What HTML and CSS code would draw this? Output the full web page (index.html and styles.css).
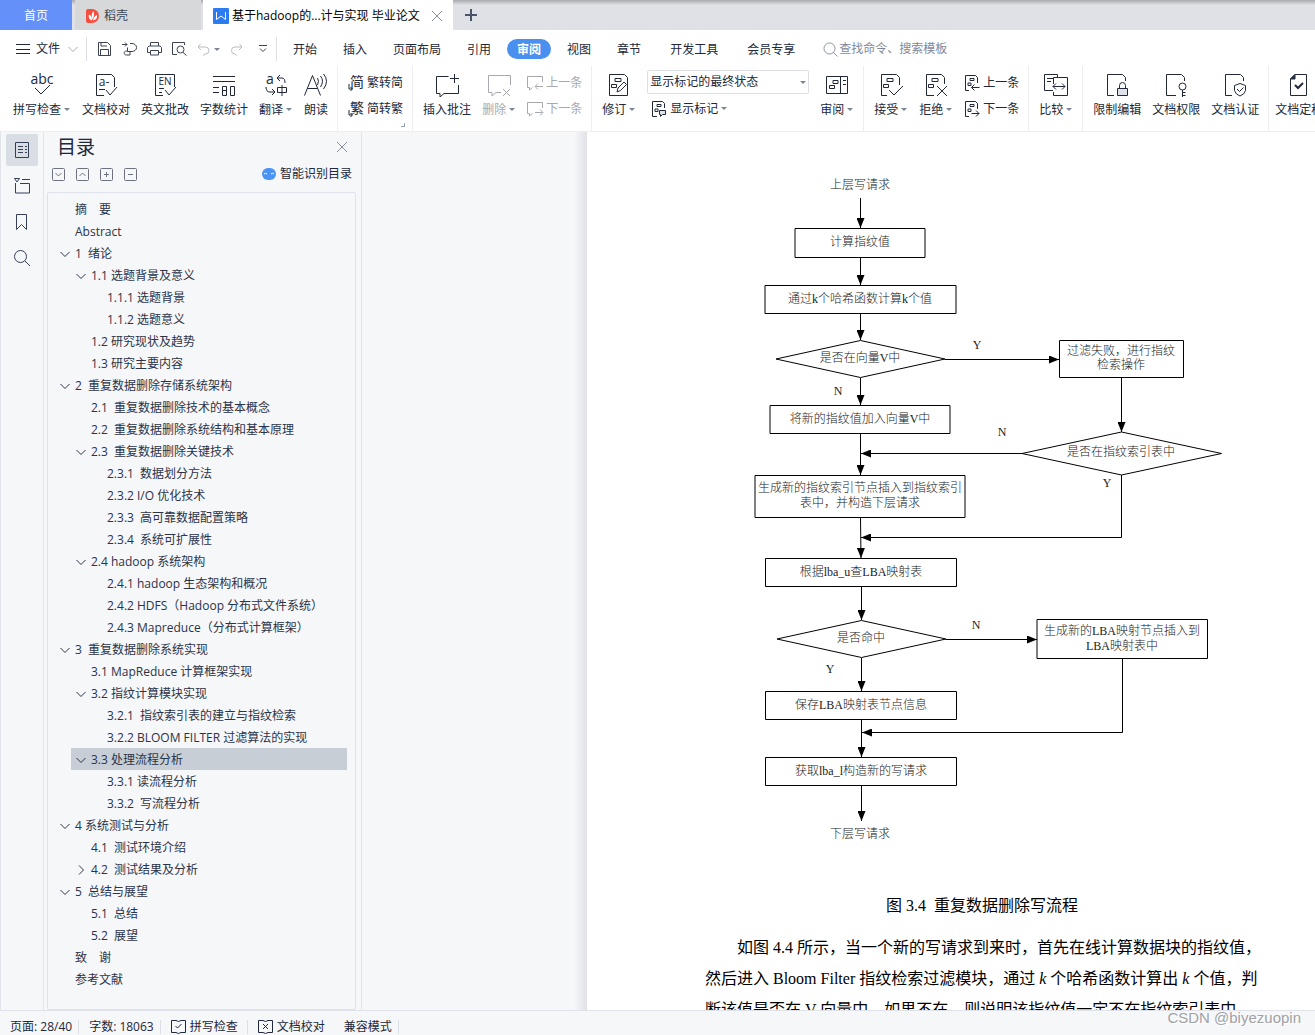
FILE: index.html
```html
<!DOCTYPE html>
<html lang="zh-CN">
<head>
<meta charset="utf-8">
<title>基于hadoop的...计与实现 毕业论文</title>
<link rel="stylesheet" href="styles.css">
</head>
<body>
<svg class="defs" aria-hidden="true">
  <symbol id="chev" viewBox="0 0 10 10"><path d="M.5 3 5 7.500 9.500 3"/></symbol>
  <symbol id="bubble" viewBox="0 0 24 24"><path d="M13.500 3.500H1.500v17h3.500v3.500l4-3.500h14.500V12"/></symbol>
  <symbol id="marks" viewBox="0 0 24 24"><path d="M8 5.500h6v3H8zM4.500 11.500h5v3h-5z"/></symbol>
  <symbol id="pageprev" viewBox="0 0 16 16"><path d="M5 15.500H1.500V.5h10l2 2V8M6 3.500h4v2H6zM4 8h3v2.500H4zM15.500 12.500H8M10.500 9.500l-3 3 3 3"/></symbol>
  <symbol id="pagenext" viewBox="0 0 16 16"><path d="M5 15.500H1.500V.5h10l2 2V8M6 3.500h4v2H6zM4 8h3v2.500H4zM7.500 12.500H15M12 9.500l3 3-3 3"/></symbol>
</svg>

<header>
  <div class="tabs">
    <button class="tab tab-home">首页</button>
    <button class="tab tab-docer">
      <svg width="14" height="14" viewBox="0 0 14 14"><path d="M0 2a2 2 0 0 1 2-2h4a7 7 0 0 1 0 14H2a2 2 0 0 1-2-2z" fill="#f5503f"/><path d="M6 11.500C2.500 10.500 2.500 7 3 5.500 5 6.500 6 8 6 11.500zM6.500 10.500C5 6.500 6 4 7.500 2 8.500 5 8 8 6.500 10.500zM7 11.500C7.500 8.500 9 6.500 11 6c.5 3-1 5-4 5.500z" fill="#fff"/></svg>
      稻壳</button>
    <div class="tab tab-doc">
      <svg width="16" height="16" viewBox="0 0 16 16"><rect width="16" height="16" rx="1" fill="#2b7cf0"/><path class="mark" d="M3.500 4v7.500L8 8l4.500 3.500V4"/></svg>
      <span>基于hadoop的...计与实现 毕业论文</span>
      <button class="close" aria-label="关闭标签"><svg width="10" height="10" viewBox="0 0 10 10"><path d="M0 0l10 10M10 0 0 10"/></svg></button>
    </div>
    <button class="newtab" aria-label="新建"><svg width="12" height="12" viewBox="0 0 12 12"><path d="M6 0v12M0 6h12"/></svg></button>
  </div>

  <div class="menubar">
    <button class="file"><svg width="14" height="10" viewBox="0 0 14 10"><path d="M0 .5h14M0 5.500h14M0 9.500h14"/></svg>文件<svg class="dim" width="10" height="10"><use href="#chev"/></svg></button>
    <div class="quick">
      <button aria-label="保存"><svg width="15" height="14" viewBox="0 0 15 14"><path d="M1.500.5h9l3 3v10h-12zM3.500 13V7.500h8V13M4 .5v3.500h6"/></svg></button>
      <button aria-label="输出"><svg width="15" height="14" viewBox="0 0 15 14"><path d="M0 2.500h5M3 .5l2 2-2 2M8 1.500h2a4 3.500 0 0 1 0 8H5.500V5.500M5.500 9.500a2 2 0 1 0-1 3.500h3.500v-3.500"/></svg></button>
      <button aria-label="打印"><svg width="15" height="14" viewBox="0 0 15 14"><path d="M3.500 4V.5h8V4M3.500 10.500H.5v-5L2 4h11l1.500 1.500v5h-3M3.500 8.500h8v4.500h-8z"/></svg></button>
      <button aria-label="打印预览"><svg width="15" height="14" viewBox="0 0 15 14"><path d="M5 12.500H.5V.5h12V3M11 10.500l3.500 3"/><circle cx="8.500" cy="7.500" r="3.500"/></svg></button>
      <button class="dim" aria-label="撤销"><svg width="13" height="13" viewBox="0 0 13 13"><path d="M3.500 1 1 4l3 3M1 4h7.500a3.500 3.500 0 0 1 0 7L6 12.500"/></svg></button>
      <i class="arrow"></i>
      <button class="dim" aria-label="恢复"><svg width="13" height="13" viewBox="0 0 13 13"><path d="M9.500 1 12 4 9 7M12 4H5a3.500 3.500 0 0 0 0 7l1.500 1.500"/></svg></button>
      <button class="custom" aria-label="自定义"><svg width="8" height="8" viewBox="0 0 8 8"><path d="M0 .5h8M1 3.500l3 3 3-3"/></svg></button>
    </div>
    <nav class="menus">
      <a href="#">开始</a><a href="#">插入</a><a href="#">页面布局</a><a href="#">引用</a><a href="#" class="on">审阅</a><a href="#">视图</a><a href="#">章节</a><a href="#" class="wide">开发工具</a><a href="#" class="wide">会员专享</a>
    </nav>
    <label class="search"><svg width="15" height="15" viewBox="0 0 15 15"><circle cx="6.500" cy="6.500" r="5.500"/><path d="m10.500 10.500 4 4"/></svg><input type="text" placeholder="查找命令、搜索模板" aria-label="查找命令"></label>
  </div>

  <div class="ribbon">
    <div class="group">
      <button class="big"><svg width="24" height="24" viewBox="0 0 24 24"><text x="12" y="11" class="glyph g14">abc</text><path d="m5 15 6 6 9-9"/></svg><span>拼写检查<i class="arrow"></i></span></button>
      <button class="big"><svg width="24" height="24" viewBox="0 0 24 24"><path d="M10 22.500H2.500v-21h15l3 3V14M5 16.500h6M12 17l4 5 7-8"/><text x="10" y="13" class="glyph g12">a-</text></svg><span>文档校对</span></button>
      <button class="big"><svg width="24" height="24" viewBox="0 0 24 24"><path d="M10 22.500H2.500v-21h19V14M6 15.500h5M6 19.500h3M12 17l4 5 7-8"/><text x="12" y="12" class="glyph g10">EN</text></svg><span>英文批改</span></button>
      <button class="big"><svg width="24" height="24" viewBox="0 0 24 24"><path d="M1 3.500h22M1 8.500h22M1 14.500h6M1 19.500h6M10.500 13.500h4v9h-4zM18.500 13.500h4v9h-4zM10 17.500h5"/></svg><span>字数统计</span></button>
      <button class="big"><svg width="24" height="24" viewBox="0 0 24 24"><text x="6" y="11" class="glyph g14">a</text><path d="M16 2l-3 3 3 3M13 5h5q3 0 3 5M2 14q0 5 4 5h5M8 16l3 3-3 3M13.500 14.500h9v5h-9zM18 12v11"/></svg><span>翻译<i class="arrow"></i></span></button>
      <button class="big"><svg width="24" height="24" viewBox="0 0 24 24"><path d="m.5 22.500 8-20 8 20M3.500 15.500h10M13.500 5q2 3 0 7M16.500 3q4 5 0 11M19.500 1q6 7 0 15"/></svg><span>朗读</span></button>
    </div>
    <div class="group corner">
      <div class="stack">
        <button class="small"><svg width="16" height="16" viewBox="0 0 16 16"><text x="9" y="12" class="glyph g14">简</text><path d="M1 9v5h3M2.500 12l2 2-2 2"/></svg>繁转简</button>
        <button class="small"><svg width="16" height="16" viewBox="0 0 16 16"><text x="9" y="12" class="glyph g14">繁</text><path d="M1 9v5h3M2.500 12l2 2-2 2"/></svg>简转繁</button>
      </div>
    </div>
    <div class="group">
      <button class="big"><svg width="24" height="24" viewBox="0 0 24 24"><use href="#bubble"/><path d="M19.500 1v9M15 5.500h9"/></svg><span>插入批注</span></button>
      <button class="big dim"><svg width="24" height="24" viewBox="0 0 24 24"><path d="M23.500 12V2.500h-22v17H5V23l4-3.500h5M16 16l7 7M23 16l-7 7"/></svg><span>删除<i class="arrow"></i></span></button>
      <div class="stack">
        <button class="small dim"><svg width="16" height="16" viewBox="0 0 16 16"><path d="M15.500 7V1.500H.5v11h2V15l3-2.500M16 11.500H8.500M11 8.500l-3 3 3 3"/></svg>上一条</button>
        <button class="small dim"><svg width="16" height="16" viewBox="0 0 16 16"><path d="M15.500 7V1.500H.5v11h2V15l3-2.500M8 11.500h7.500M13 8.500l3 3-3 3"/></svg>下一条</button>
      </div>
    </div>
    <div class="group">
      <button class="big"><svg width="24" height="24" viewBox="0 0 24 24"><path d="M2.500 1.500h15l3 3v18h-18zM10 19l1-4 6-6 2.500 2.500-6 6z"/><use href="#marks"/></svg><span>修订<i class="arrow"></i></span></button>
      <div class="stack">
        <label class="combo"><select aria-label="显示状态"><option>显示标记的最终状态</option></select><i class="arrow"></i></label>
        <button class="small inset"><svg width="16" height="16" viewBox="0 0 16 16"><path d="M6 15.500H1.500V.5h10l2 2V7M6 3.500h4v2H6zM4 8h3v2.500H4z"/><path d="M8.500 9.500h6v4h-3l-2 2v-2h-1z" fill="#dfe2e8"/></svg><span>显示标记<i class="arrow"></i></span></button>
      </div>
      <button class="big"><svg width="24" height="24" viewBox="0 0 24 24"><path d="M1.500 3.500h21v17h-21zM15.500 3.500v17M18 7.500h3M18 11.500h3M8 7.500h5v3H8zM4.500 12.500h5v3h-5z"/></svg><span>审阅<i class="arrow"></i></span></button>
    </div>
    <div class="group">
      <button class="big"><svg width="24" height="24" viewBox="0 0 24 24"><path d="M8 22.500H2.500v-21h15l3 3V12M10 17l5 5 9-9"/><use href="#marks"/></svg><span>接受<i class="arrow"></i></span></button>
      <button class="big"><svg width="24" height="24" viewBox="0 0 24 24"><path d="M10 22.500H2.500v-21h15l3 3V11M13 13l10 10M23 13 13 23"/><use href="#marks"/></svg><span>拒绝<i class="arrow"></i></span></button>
      <div class="stack">
        <button class="small"><svg width="16" height="16"><use href="#pageprev"/></svg>上一条</button>
        <button class="small"><svg width="16" height="16"><use href="#pagenext"/></svg>下一条</button>
      </div>
    </div>
    <div class="group">
      <button class="big"><svg width="24" height="24" viewBox="0 0 24 24"><path d="M9 17.500H.5v-16h13V4.500M3 5.500h7M3 8.500h4M9.500 11V4.500h14v18h-14V19M9 13.500h12M12 10.500l-3 3 3 3M18 10.500l3 3-3 3"/></svg><span>比较<i class="arrow"></i></span></button>
    </div>
    <div class="group">
      <button class="big"><svg width="24" height="24" viewBox="0 0 24 24"><path d="M9 22.500H2.500v-21h15l3 3V8M14.500 15v-2.500a3 3 0 0 1 6 0V15"/><path d="M12.500 15.500h10v7h-10z" fill="#dfe2e8"/></svg><span>限制编辑</span></button>
      <button class="big"><svg width="24" height="24" viewBox="0 0 24 24"><path d="M12 22.500H2.500v-21h15l3 3V8M18.500 17v7M18.500 19.500h3M18.500 22.500h3"/><circle cx="18.500" cy="13.500" r="3.500"/></svg><span>文档权限</span></button>
      <button class="big"><svg width="24" height="24" viewBox="0 0 24 24"><path d="M9 22.500H2.500v-21h15l3 3V8M17 10.500l5.500 2v5q-1 4-5.500 5.500-4.500-1.500-5.500-5.500v-5zM14 16l2.500 2.500 4-4"/></svg><span>文档认证</span></button>
    </div>
    <div class="group">
      <button class="big"><svg width="24" height="24" viewBox="0 0 24 24"><path d="M8 1.500h11.500v21h-16V6z"/><path d="M8 1.500V6H3.500z" fill="#2c3346"/><path d="m8 12 3 3 5-5" stroke-width="2"/></svg><span>文档定稿</span></button>
    </div>
  </div>
</header>

<main>
  <nav class="rail">
    <button class="on" aria-label="目录"><svg width="16" height="16" viewBox="0 0 16 16"><path d="M1.500.5h13v15h-13zM4 4.500h5M11 4.500h2M4 7.500h5M11 7.500h2M4 10.500h5M11 10.500h2"/></svg></button>
    <button aria-label="章节"><svg width="16" height="16" viewBox="0 0 16 16"><path d="M.5.5h5L3 4zM8 1.500h8M1.500 5v10h14V5.500H6"/></svg></button>
    <button aria-label="书签"><svg width="16" height="16" viewBox="0 0 16 16"><path d="M2.500.5h10v15l-5-5-5 5z"/></svg></button>
    <button aria-label="查找"><svg width="16" height="16" viewBox="0 0 16 16"><circle cx="6.500" cy="6.500" r="6"/><path d="m11 11 5 5"/></svg></button>
  </nav>

  <aside class="outline">
    <div class="outline-head"><h2>目录</h2><button class="close" aria-label="关闭"><svg width="10" height="10" viewBox="0 0 10 10"><path d="M0 0l10 10M10 0 0 10"/></svg></button></div>
    <div class="outline-tools">
      <button aria-label="展开"><svg width="13" height="13" viewBox="0 0 13 13"><rect x=".5" y=".5" width="12" height="12" rx="1"/><path d="m3.500 5 3 3 3-3"/></svg></button>
      <button aria-label="收起"><svg width="13" height="13" viewBox="0 0 13 13"><rect x=".5" y=".5" width="12" height="12" rx="1"/><path d="m3.500 8 3-3 3 3"/></svg></button>
      <button aria-label="升级"><svg width="13" height="13" viewBox="0 0 13 13"><rect x=".5" y=".5" width="12" height="12" rx="1"/><path d="M4 6.500h5M6.500 4v5"/></svg></button>
      <button aria-label="降级"><svg width="13" height="13" viewBox="0 0 13 13"><rect x=".5" y=".5" width="12" height="12" rx="1"/><path d="M4 6.500h5"/></svg></button>
      <button class="smart"><svg width="14" height="12" viewBox="0 0 14 12"><rect width="14" height="12" rx="6" fill="#4a94f5" stroke="none"/><path d="M2 6q1.500-1.500 3 0M9 6q1.500-1.500 3 0" stroke="#fff"/></svg>智能识别目录</button>
    </div>
    <ul class="tree">
      <li class="l1"><a href="#">摘　要</a></li>
      <li class="l1"><a href="#">Abstract</a></li>
      <li class="l1"><button aria-label="折叠"><svg width="10" height="10"><use href="#chev"/></svg></button><a href="#">1&nbsp; 绪论</a></li>
      <li class="l2"><button aria-label="折叠"><svg width="10" height="10"><use href="#chev"/></svg></button><a href="#">1.1 选题背景及意义</a></li>
      <li class="l3"><a href="#">1.1.1 选题背景</a></li>
      <li class="l3"><a href="#">1.1.2 选题意义</a></li>
      <li class="l2"><a href="#">1.2 研究现状及趋势</a></li>
      <li class="l2"><a href="#">1.3 研究主要内容</a></li>
      <li class="l1"><button aria-label="折叠"><svg width="10" height="10"><use href="#chev"/></svg></button><a href="#">2&nbsp; 重复数据删除存储系统架构</a></li>
      <li class="l2"><a href="#">2.1&nbsp; 重复数据删除技术的基本概念</a></li>
      <li class="l2"><a href="#">2.2&nbsp; 重复数据删除系统结构和基本原理</a></li>
      <li class="l2"><button aria-label="折叠"><svg width="10" height="10"><use href="#chev"/></svg></button><a href="#">2.3&nbsp; 重复数据删除关键技术</a></li>
      <li class="l3"><a href="#">2.3.1&nbsp; 数据划分方法</a></li>
      <li class="l3"><a href="#">2.3.2 I/O 优化技术</a></li>
      <li class="l3"><a href="#">2.3.3&nbsp; 高可靠数据配置策略</a></li>
      <li class="l3"><a href="#">2.3.4&nbsp; 系统可扩展性</a></li>
      <li class="l2"><button aria-label="折叠"><svg width="10" height="10"><use href="#chev"/></svg></button><a href="#">2.4 hadoop 系统架构</a></li>
      <li class="l3"><a href="#">2.4.1 hadoop 生态架构和概况</a></li>
      <li class="l3"><a href="#">2.4.2 HDFS（Hadoop 分布式文件系统）</a></li>
      <li class="l3"><a href="#">2.4.3 Mapreduce（分布式计算框架）</a></li>
      <li class="l1"><button aria-label="折叠"><svg width="10" height="10"><use href="#chev"/></svg></button><a href="#">3&nbsp; 重复数据删除系统实现</a></li>
      <li class="l2"><a href="#">3.1 MapReduce 计算框架实现</a></li>
      <li class="l2"><button aria-label="折叠"><svg width="10" height="10"><use href="#chev"/></svg></button><a href="#">3.2 指纹计算模块实现</a></li>
      <li class="l3"><a href="#">3.2.1&nbsp; 指纹索引表的建立与指纹检索</a></li>
      <li class="l3"><a href="#">3.2.2 BLOOM FILTER 过滤算法的实现</a></li>
      <li class="l2 current"><button aria-label="折叠"><svg width="10" height="10"><use href="#chev"/></svg></button><a href="#">3.3 处理流程分析</a></li>
      <li class="l3"><a href="#">3.3.1 读流程分析</a></li>
      <li class="l3"><a href="#">3.3.2&nbsp; 写流程分析</a></li>
      <li class="l1"><button aria-label="折叠"><svg width="10" height="10"><use href="#chev"/></svg></button><a href="#">4 系统测试与分析</a></li>
      <li class="l2"><a href="#">4.1&nbsp; 测试环境介绍</a></li>
      <li class="l2"><button aria-label="展开"><svg width="10" height="10" viewBox="0 0 10 10"><path d="M3 .5 7.500 5 3 9.500"/></svg></button><a href="#">4.2&nbsp; 测试结果及分析</a></li>
      <li class="l1"><button aria-label="折叠"><svg width="10" height="10"><use href="#chev"/></svg></button><a href="#">5&nbsp; 总结与展望</a></li>
      <li class="l2"><a href="#">5.1&nbsp; 总结</a></li>
      <li class="l2"><a href="#">5.2&nbsp; 展望</a></li>
      <li class="l1"><a href="#">致　谢</a></li>
      <li class="l1"><a href="#">参考文献</a></li>
    </ul>
  </aside>

  <section class="canvas">
    <article class="paper">
      <figure>
        <svg class="flow" width="500" height="680" viewBox="732 170 500 680">
          <defs><marker id="tip" viewBox="0 0 10 8" refX="10" refY="4" markerWidth="11" markerHeight="8" markerUnits="userSpaceOnUse" orient="auto"><path d="M0 0 10 4 0 8z" fill="#000" stroke="none"/></marker></defs>
          <path d="M795 228.500h130v29H795zM765 285.500h191v28H765zM770 405.500h180v28H770zM755 475.500h210v42H755zM765.500 558.500h191v28h-191zM765.500 691.500h191v28h-191zM765.500 757.500h191v28h-191zM1059.500 340.500h124v37h-124zM1037 619.500h170.500v39H1037z"/>
          <path d="m776 359 84.500-18.500L945 359l-84.500 18.500zM777 639l84.500-18.500L946 639l-84.500 18.500zM1022 453.500l99.500-21.500 100 21.500-100 21.500z"/>
          <g marker-end="url(#tip)">
            <path d="M860.500 198v30"/><path d="M860.500 258v27"/><path d="M860.500 314v26"/><path d="M860.500 378v27"/><path d="M860.500 434v41"/><path d="M860.500 518l.5 40"/><path d="M861.500 587v33"/><path d="M861.500 658v33"/><path d="M861.500 720v37"/><path d="M861.500 786v35"/>
            <path d="M945 359.500h114"/><path d="M1121.500 378v54"/><path d="M1022 453.500H861"/><path d="M1121.500 475v62.500H861"/><path d="M946 639.500h91"/><path d="M1122.500 659v73.500H862"/>
          </g>
          <g class="flow-text">
            <text x="860" y="189">上层写请求</text><text x="860" y="246">计算指纹值</text><text x="860" y="303">通过k个哈希函数计算k个值</text><text x="860" y="362">是否在向量V中</text><text x="860" y="423">将新的指纹值加入向量V中</text>
            <text x="860" y="492">生成新的指纹索引节点插入到指纹索引</text><text x="860" y="507">表中，并构造下层请求</text><text x="861" y="576">根据lba_u查LBA映射表</text><text x="861" y="642">是否命中</text><text x="861" y="709">保存LBA映射表节点信息</text><text x="861" y="775">获取lba_l构造新的写请求</text><text x="860" y="838">下层写请求</text>
            <text x="1121" y="355">过滤失败，进行指纹</text><text x="1121" y="369">检索操作</text><text x="1121" y="456">是否在指纹索引表中</text><text x="1122" y="635">生成新的LBA映射节点插入到</text><text x="1122" y="650">LBA映射表中</text>
            <text x="977" y="349">Y</text><text x="838" y="395">N</text><text x="1002" y="436">N</text><text x="1107" y="487">Y</text><text x="976" y="629">N</text><text x="830" y="673">Y</text>
          </g>
        </svg>
        <figcaption>图 3.4&nbsp; 重复数据删除写流程</figcaption>
      </figure>
      <p>如图 4.4 所示，当一个新的写请求到来时，首先在线计算数据块的指纹值，<br>然后进入 Bloom Filter 指纹检索过滤模块，通过 <em>k</em> 个哈希函数计算出 <em>k</em> 个值，判<br>断该值是否在 V 向量中，如果不在，则说明该指纹值一定不在指纹索引表中，</p>
    </article>
  </section>
</main>

<footer>
  <span class="cell">页面: 28/40</span>
  <span class="cell">字数: 18063</span>
  <button class="cell"><svg width="15" height="15" viewBox="0 0 15 15"><path d="M5 1.500H.5v12H5l2.500 1 2.500-1h4.500v-12H10M5 1.500l2.500 1 2.500-1M4.500 7l2 2 4-4"/></svg>拼写检查</button>
  <button class="cell plain"><svg width="15" height="15" viewBox="0 0 15 15"><path d="M5 1.500H.5v12H5l2.500 1 2.500-1h4.500v-12H10M5 1.500l2.500 1 2.500-1M5 5l5 5M10 5l-5 5"/></svg>文档校对</button>
  <span class="cell">兼容模式</span>
</footer>
<div class="watermark">CSDN @biyezuopin</div>
</body>
</html>
```
FILE: styles.css
```css
* { box-sizing: border-box; }
body {
  margin: 0;
  height: 100vh;
  display: flex;
  flex-direction: column;
  overflow: hidden;
  background: #f6f7f9;
  color: #20283a;
  font: 12px/18px "Open Sans", "Noto Sans CJK SC", sans-serif;
  white-space: nowrap;
}
button, input, select { margin: 0; padding: 0; border: 0; background: none; color: inherit; font: inherit; }
button { display: flex; align-items: center; }
a { color: inherit; text-decoration: none; }
svg { flex: none; fill: none; stroke: currentColor; overflow: visible; }
.defs { position: absolute; width: 0; height: 0; }
.dim { color: #a6a9b0; }
.arrow {
  flex: none;
  display: inline-block;
  margin: 0 1px 0 3px;
  border: 3px solid transparent;
  border-top-color: #7c8498;
  border-bottom: 0;
  vertical-align: 3px;
}

/* Window tabs */
.tabs { display: flex; height: 30px; background: linear-gradient(#a8aaae, #dfe1e6 5px); }
.tab { display: flex; align-items: center; padding-top: 2px; }
.tab-home { width: 72px; justify-content: center; background: #6390f9; color: #fff; }
.tab-docer { width: 126px; margin: 0 2px 0 3px; padding-left: 11px; gap: 4px; background: #d7d8da; color: #3f4654; }
.tab-docer svg, .tab-doc > svg { stroke: none; }
.tab-doc .mark { fill: none; stroke: #fff; }
.tab-doc { width: 250px; padding-right: 11px; padding-left: 10px; gap: 3px; background: #fff; color: #000; }
.tab-doc .close { margin-left: auto; }
.close { color: #8a92a5; }
.newtab { padding: 0 12px; color: #4a5468; }
.newtab svg { stroke-width: 2; }

/* Menu bar */
.menubar { display: flex; align-items: center; height: 36px; padding: 2px 0 0 16px; background: #fff; }
.file { gap: 6px; height: 24px; padding-right: 8px; border-right: 1px solid #dcdfe5; }
.file .dim { margin-left: 2px; }
.quick { display: flex; align-items: center; gap: 10px; height: 24px; padding: 0 9px 0 10px; border-right: 1px solid #dcdfe5; color: #3c4354; }
.quick .dim { color: #b9bcc3; }
.quick .arrow { margin: 0 0 0 -6px; }
.quick .custom { margin: 0 0 0 6px; }
.menus { display: flex; align-items: center; gap: 26px; margin-left: 16px; }
.menus a { padding-top: 2px; }
.menus .on { margin: 0 -10px; padding: 2px 10px 0; border-radius: 10px; background: #4a90f0; color: #fff; font-weight: bold; }
.menus .wide { margin-left: 3px; }
.search { display: flex; align-items: center; gap: 1px; margin-left: 28px; color: #8b93a6; }
.search input { width: 120px; }
.search input::placeholder { color: #7f879b; opacity: 1; }

/* Ribbon */
.ribbon { display: flex; flex: none; height: 66px; padding: 0 0 0 3px; overflow: hidden; background: #fff; border-bottom: 1px solid #eceef1; }
.group { display: flex; flex: none; align-items: flex-start; gap: 11px; padding: 7px 9px 0 10px; border-right: 1px solid #eceef1; }
.group:last-child { border: 0; padding-left: 6px; }
.big { flex-direction: column; gap: 4px; }
.stack { display: flex; flex-direction: column; gap: 6px; }
.small { gap: 3px; height: 20px; }
.corner { background: linear-gradient(#9aa1b1, #9aa1b1) right 7px bottom 4px / 4px 1px no-repeat, linear-gradient(#9aa1b1, #9aa1b1) right 7px bottom 4px / 1px 4px no-repeat; }
.glyph { fill: currentColor; stroke: none; text-anchor: middle; }
.g14 { font-size: 14px; }
.g12 { font-size: 12px; }
.g10 { font-size: 10px; }
.combo { display: flex; align-items: center; width: 162px; height: 24px; margin: -3px 0 -1px; padding: 0 1px 0 2px; border: 1px solid #dcdfe5; border-radius: 2px; }
.combo select { flex: 1; appearance: none; }
.inset { margin-left: 4px; }

/* Body */
main { display: flex; flex: 1; min-height: 0; border-bottom: 1px solid #dfe2e8; }
.rail { display: flex; flex-direction: column; gap: 4px; width: 44px; padding: 2px 5px; border: solid #e1e4ea; border-width: 0 1px; }
.rail button { justify-content: center; width: 32px; height: 32px; border-radius: 2px; color: #343e57; }
.rail .on { background: #d9dde4; }
.outline { display: flex; flex-direction: column; width: 318px; padding: 0 5px 0 3px; border-right: 1px solid #e1e4ea; }
.outline-head { display: flex; align-items: center; justify-content: space-between; height: 30px; padding: 0 9px 0 10px; }
.outline-head h2 { margin: 0; font-size: 19px; line-height: 28px; font-weight: normal; }
.outline-tools { display: flex; align-items: center; gap: 11px; height: 24px; padding: 0 4px 0 5px; color: #6c7280; }
.smart { gap: 4px; margin-left: auto; color: #20283a; }
.tree { flex: 1; min-height: 0; margin: 6px 0 0; padding: 5px 8px 0 7px; border: 1px solid #dfe2ea; border-radius: 2px; overflow: hidden; list-style: none; color: #2b3347; }
.tree li { display: flex; align-items: center; height: 22px; padding-left: 20px; }
.tree a { padding-top: 2px; }
.tree button { justify-content: center; width: 20px; height: 22px; margin-left: -20px; padding-top: 2px; }
.tree .l2 { margin-left: 16px; }
.tree .l3 { margin-left: 32px; }
.tree .current { background: #c7ced6; }

/* Document */
.canvas { flex: 1; min-width: 0; padding-left: 225px; overflow: hidden; background: linear-gradient(90deg, #f6f7f9 212px, #e0e2e6 225px); }
.paper { height: 100%; padding: 38px 56px 0 118px; background: #fff; color: #000; font: 16px/31px "Liberation Serif", "Noto Sans CJK SC", serif; overflow: hidden; }
figure { display: flex; flex-direction: column; align-items: center; gap: 40px; max-width: 554px; margin: 0 0 11px; }
.flow { stroke: #000; }
.flow-text { fill: #222; stroke: none; font-size: 12px; font-weight: 300; text-anchor: middle; }
.paper p { margin: 0; text-indent: 32px; }

/* Status bar */
footer { display: flex; align-items: center; flex: none; height: 24px; padding: 7px 0 0; }
.cell { display: flex; align-items: center; gap: 4px; height: 14px; padding: 0 6px 0 10px; border-right: 1px solid #dcdfe5; }
button.cell { padding-right: 9px; }
button.plain { border: 0; }
.watermark { position: absolute; right: 14px; bottom: 6px; color: #a0a2a6; font: 15px/22px "Liberation Sans", sans-serif; text-shadow: 1px 1px #fff; }
```
